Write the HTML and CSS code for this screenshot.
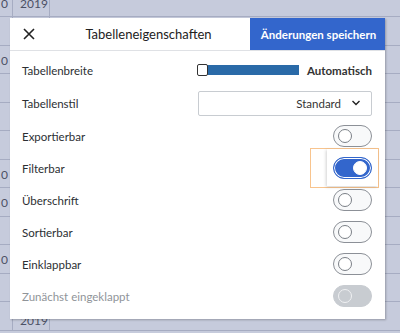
FILE: index.html
```html
<!DOCTYPE html>
<html lang="de">

<head>
    <meta charset="UTF-8">
    <meta name="viewport" content="width=device-width, initial-scale=1.0">
    <title>Tabelleneigenschaften</title>
    <link rel="stylesheet" href="styles.css">
</head>

<body>

    <div class="sheet">
        <div class="cell c1">0</div><div class="cell c2">2019</div><div class="cell"></div>
        <div class="cell c1"></div><div class="cell c2"></div><div class="cell"></div>
        <div class="cell c1">0</div><div class="cell c2"></div><div class="cell"></div>
        <div class="cell c1"></div><div class="cell c2"></div><div class="cell"></div>
        <div class="cell c1"></div><div class="cell c2"></div><div class="cell"></div>
        <div class="cell c1"></div><div class="cell c2"></div><div class="cell"></div>
        <div class="cell c1">0</div><div class="cell c2"></div><div class="cell"></div>
        <div class="cell c1">0</div><div class="cell c2"></div><div class="cell"></div>
        <div class="cell c1"></div><div class="cell c2"></div><div class="cell"></div>
        <div class="cell c1">0</div><div class="cell c2"></div><div class="cell"></div>
        <div class="cell c1"></div><div class="cell c2"></div><div class="cell"></div>
        <div class="cell c1"></div><div class="cell c2 low">2019</div><div class="cell"></div>
    </div>

    <div class="dialog">
        <div class="dialog-head">
            <button class="close" aria-label="Schließen">
                <svg width="12" height="12" viewBox="0 0 12 12">
                    <path d="M1 1 L11 11 M11 1 L1 11" stroke="#222" stroke-width="1.6" fill="none" />
                </svg>
            </button>
            <div class="title">Tabelleneigenschaften</div>
            <button class="save">Änderungen speichern</button>
        </div>

        <div class="dialog-body">
            <div class="row">
                <span class="label">Tabellenbreite</span>
                <div class="width-ctrl">
                    <div class="slider"><span class="handle"></span></div>
                    <span class="auto">Automatisch</span>
                </div>
            </div>
            <div class="row row-select">
                <span class="label">Tabellenstil</span>
                <div class="select">
                    <span>Standard</span>
                    <svg width="10" height="6" viewBox="0 0 10 6">
                        <path d="M1.5 1 L5 4.5 L8.5 1" stroke="#222" stroke-width="1.4" fill="none" />
                    </svg>
                </div>
            </div>
            <div class="row">
                <span class="label">Exportierbar</span>
                <span class="toggle"><span class="knob"></span></span>
            </div>
            <div class="row">
                <span class="label">Filterbar</span>
                <span class="toggle on"><span class="knob"></span></span>
            </div>
            <div class="row">
                <span class="label">Überschrift</span>
                <span class="toggle"><span class="knob"></span></span>
            </div>
            <div class="row">
                <span class="label">Sortierbar</span>
                <span class="toggle"><span class="knob"></span></span>
            </div>
            <div class="row">
                <span class="label">Einklappbar</span>
                <span class="toggle"><span class="knob"></span></span>
            </div>
            <div class="row">
                <span class="label disabled">Zunächst eingeklappt</span>
                <span class="toggle off-disabled"><span class="knob"></span></span>
            </div>
        </div>

        <div class="focus-ring"></div>
        <div class="focus-card"></div>
    </div>

</body>

</html>
```

FILE: styles.css
```css
:root {
    --lato: "Lato", "Liberation Sans", sans-serif;
    --sheet-bg: #c6cbdc;
    --sheet-line: #a6acc2;
    --text: #222;
    --blue: #3366cc;
    --bar: #2a6aa8;
}

* {
    margin: 0;
    padding: 0;
    box-sizing: border-box;
}

body {
    width: 400px;
    height: 333px;
    overflow: hidden;
    background-color: var(--sheet-bg);
    font-family: var(--lato);
    position: relative;
}

.sheet {
    display: grid;
    grid-template-columns: 13px 37px 1fr;
    grid-auto-rows: 28.5px;
    margin-top: -11.5px;
    height: 344px;
    overflow: hidden;
}

.cell {
    border-bottom: 1px solid var(--sheet-line);
    color: #4c5166;
    font-size: 12px;
    line-height: 30px;
}

.cell.c1,
.cell.c2 {
    border-right: 1px solid var(--sheet-line);
}

.cell.c1 {
    direction: rtl;
    overflow: hidden;
    padding-right: 4px;
}

.cell.c2 {
    padding-left: 7px;
}

.cell.low {
    line-height: 38px;
}

.dialog {
    position: absolute;
    left: 10px;
    top: 18px;
    width: 375px;
    height: 301px;
    background-color: #fff;
    box-shadow: 1px 1px 2px rgba(0, 0, 0, 0.25);
}

.dialog-head {
    display: flex;
    align-items: stretch;
    height: 33px;
    border-bottom: 1px solid #dfe1e5;
}

.close {
    width: 35px;
    border: none;
    background: none;
    display: flex;
    align-items: center;
    justify-content: center;
    padding-left: 2px;
}

.title {
    flex: 1;
    display: flex;
    align-items: center;
    justify-content: center;
    font-size: 13px;
    color: var(--text);
    padding-left: 2px;
}

.save {
    width: 135px;
    border: none;
    background-color: var(--blue);
    color: #fff;
    font-family: var(--lato);
    font-weight: 700;
    font-size: 11.5px;
    padding-left: 2px;
}

.dialog-body {
    padding: 3px 13px 0 12px;
}

.row {
    display: flex;
    align-items: center;
    justify-content: space-between;
    height: 32px;
}

.row-select {
    height: 34px;
}

.label {
    font-size: 11.5px;
    color: #2c2f33;
}

.label.disabled {
    color: #909499;
}

.width-ctrl {
    display: flex;
    align-items: center;
    gap: 8px;
}

.slider {
    position: relative;
    width: 100px;
    height: 10px;
    background-color: var(--bar);
}

.handle {
    position: absolute;
    left: -2px;
    top: -1px;
    width: 11px;
    height: 12px;
    background-color: #fff;
    border: 1.5px solid #333;
    border-radius: 2px;
}

.auto {
    font-size: 11.5px;
    font-weight: 700;
    color: #333;
}

.select {
    width: 174px;
    height: 25px;
    border: 1px solid #c8ccd1;
    border-radius: 2px;
    display: flex;
    align-items: center;
    justify-content: flex-end;
    gap: 10px;
    padding-right: 10px;
    font-size: 11.5px;
    color: #333;
}

.toggle {
    position: relative;
    z-index: 2;
    width: 39px;
    height: 22px;
    border: 1px solid #8c9097;
    border-radius: 11px;
    background-color: #f8f9fa;
}

.toggle .knob {
    position: absolute;
    left: 4px;
    top: 3px;
    width: 14px;
    height: 14px;
    border-radius: 50%;
    border: 1px solid #7a7f86;
    background-color: #fff;
}

.toggle.on {
    background-color: var(--blue);
    border-color: var(--blue);
    box-shadow: inset 0 0 0 1px #fff;
}

.toggle.on .knob {
    left: 19px;
    border-color: #fff;
}

.toggle.off-disabled {
    background-color: #c8ccd1;
    border-color: #c8ccd1;
}

.toggle.off-disabled .knob {
    background-color: #c8ccd1;
    border-color: #f0f1f3;
    border-width: 1.5px;
}

.focus-ring {
    position: absolute;
    left: 300px;
    top: 130px;
    width: 69px;
    height: 40px;
    border: 1.5px solid #f8c48e;
}

.focus-card {
    position: absolute;
    z-index: 1;
    left: 317px;
    top: 131px;
    width: 51px;
    height: 37px;
    background-color: #fff;
    box-shadow: -1px 1px 3px rgba(0, 0, 0, 0.18);
}
```
